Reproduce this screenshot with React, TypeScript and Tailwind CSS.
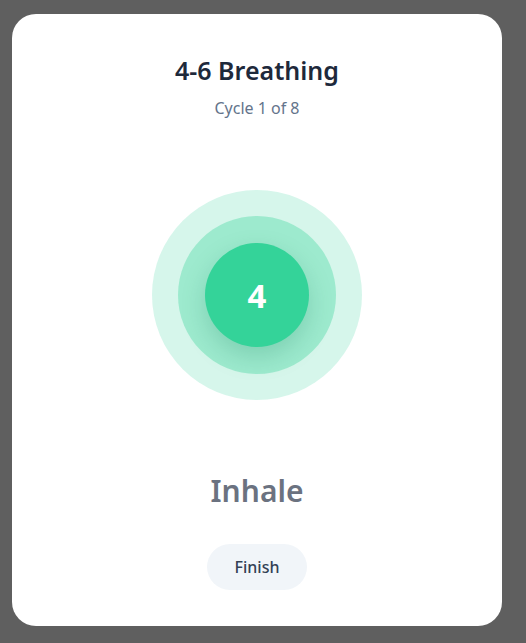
export default function App() {
  return (
    <div className="min-h-screen bg-[#5f5f5f] pt-[14px] pl-3 font-['Noto_Sans',sans-serif]">
      <div className="w-[490px] h-[612px] bg-white rounded-3xl flex flex-col items-center pt-10">
        <h1 className="text-[25px] font-semibold text-[#1e293b] leading-8">4-6 Breathing</h1>
        <p className="mt-2.5 text-base text-[#64748b] leading-6">Cycle 1 of 8</p>

        <div className="mt-[70px] w-[210px] h-[210px] rounded-full bg-[#34d399]/20 flex items-center justify-center">
          <div className="w-[158px] h-[158px] rounded-full bg-[#34d399]/35 flex items-center justify-center">
            <div className="w-[104px] h-[104px] rounded-full bg-[#34d399] flex items-center justify-center shadow-[0_10px_24px_rgba(16,120,80,0.22)]">
              <span className="text-[33px] leading-none font-bold text-white">4</span>
            </div>
          </div>
        </div>

        <p className="mt-[73px] text-3xl font-semibold text-[#6b7280] leading-9">Inhale</p>

        <button className="mt-[35px] w-[100px] h-[46px] rounded-full bg-[#f1f5f9] text-[#334155] font-medium text-base">
          Finish
        </button>
      </div>
    </div>
  );
}
